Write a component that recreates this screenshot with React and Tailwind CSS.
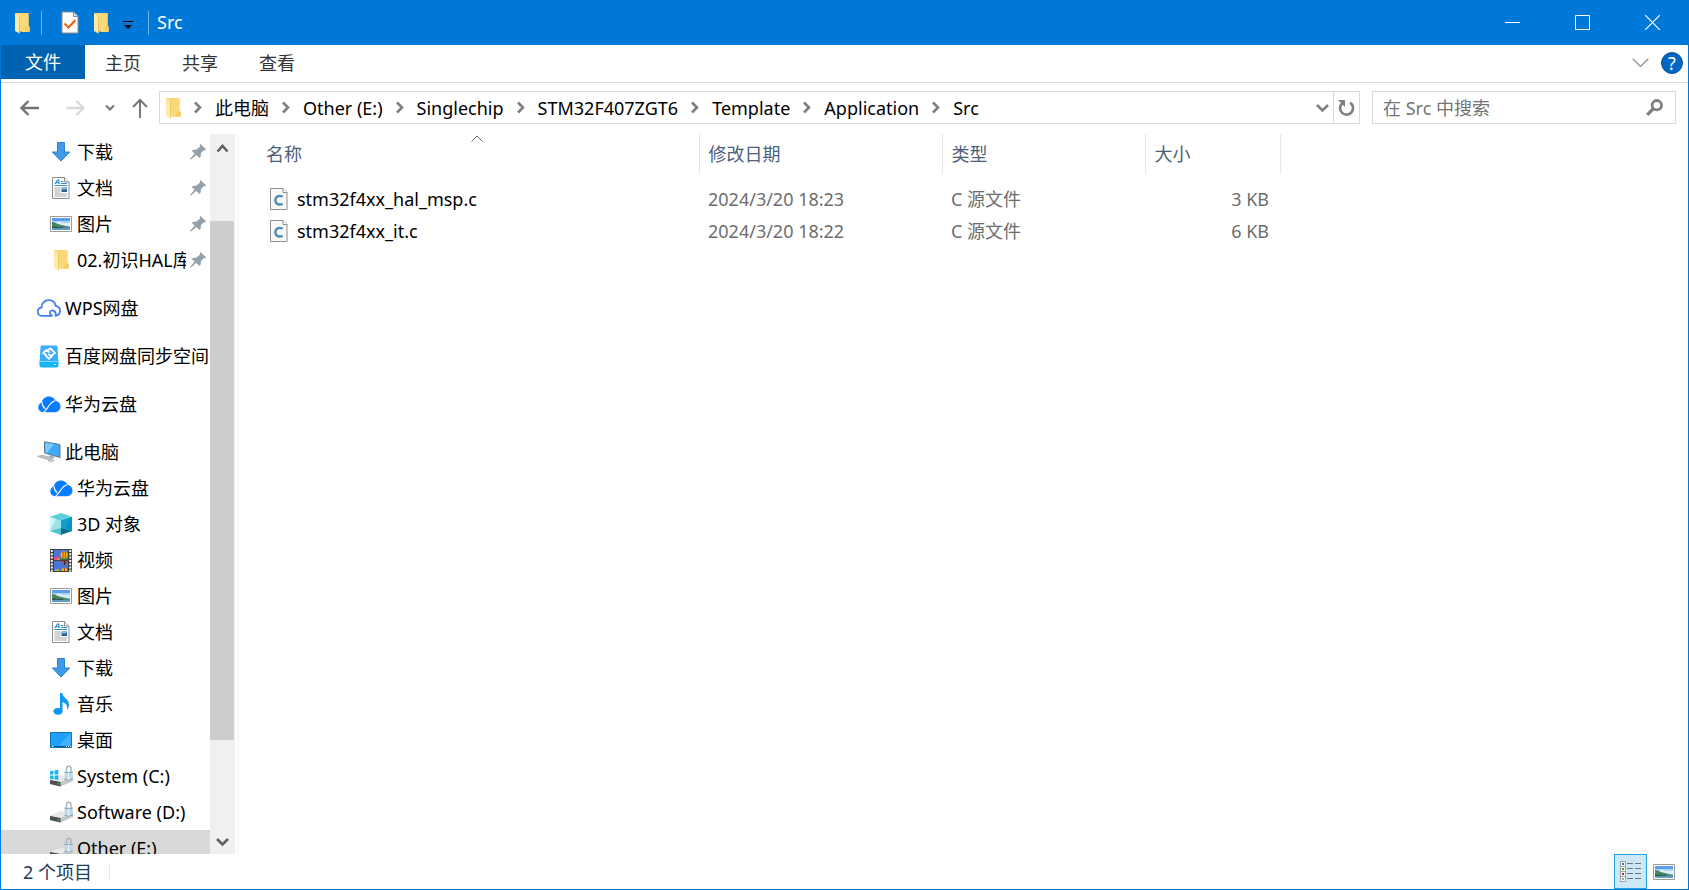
function FolderIcon() {
  return (
    <svg width="16" height="22" viewBox="0 0 16 22" className="shrink-0">
      <path d="M1 1h13.5v13l1 1v5H8z" fill="#f7d774" />
      <path d="M5.500 1H14.500V14.500H15.500V19.500H5.500z" fill="#fbd978" />
      <path d="M11.500 14.500h4v5h-4z" fill="#f6cd62" />
      <path d="M1 1.500 5.500 4v17.500L1 19z" fill="#fee9a6" />
      <path d="M5.500 4v17.500" stroke="#e5bf58" strokeWidth="0.7" />
    </svg>
  );
}

function CheckDocIcon() {
  return (
    <svg width="18" height="23" viewBox="0 0 18 23">
      <path d="M1 1h11.500L17 5.500V22H1z" fill="#fff" stroke="#8c8c8c" />
      <path d="M12.500 1v4.500H17" fill="#ddd" stroke="#8c8c8c" />
      <path d="M3.500 12.500 7.500 16.500 14.500 9" fill="none" stroke="#f25c05" strokeWidth="2" />
    </svg>
  );
}

function DownloadIcon() {
  return (
    <svg width="22" height="22" viewBox="0 0 22 22">
      <path d="M7.500 1.500h7V11h5.200L11 20 2.300 11H7.500z" fill="#3d9be9" stroke="#2f7fcb" />
    </svg>
  );
}

function DocumentIcon() {
  return (
    <svg width="22" height="22" viewBox="0 0 22 22">
      <path d="M2.500.5h12l4.500 4.500v16.500H2.500z" fill="#fff" stroke="#8a8f94" />
      <path d="M14.500.5V5H19" fill="#eee" stroke="#8a8f94" />
      <path d="M5 7 7.500 3h1.200L9.200 7M6 5.700h3" fill="none" stroke="#1b86d2" strokeWidth="1.100" />
      <path d="M11 4.500h2.500M11 6.500h6M4.500 8.500H17" stroke="#2f8fd6" />
      <path d="M4.500 11h6M4.500 13h6M4.500 15h6M4.500 17h12.500M4.500 19h12.500" stroke="#a4a9ad" />
      <path d="M11.500 10.500H17v4.500h-5.500z" fill="#2c5f8f" />
      <path d="M12 11h4.500v1.500H12z" fill="#8cbdea" />
    </svg>
  );
}

function PictureIcon() {
  return (
    <svg width="22" height="16" viewBox="0 0 22 16">
      <path d="M.5.5h21v15H.5z" fill="#fff" stroke="#9b9b9b" />
      <path d="M2 2h18v12H2z" fill="#a9d3f5" />
      <path d="M2 2h18v3H2z" fill="#5c9df0" />
      <path d="M6 6.500c3-1.500 5-.5 7 .5h7V10H6z" fill="#dcedf8" />
      <path d="M2 11h18v3H2z" fill="#5f9cc0" />
      <path d="M2 6c3 0 4.500 1.500 7.500 2.500L20 11v.8H2z" fill="#4a8565" />
      <path d="M2 10.500c5 0 7 1 11 .3v1.200H2z" fill="#2d5a55" />
    </svg>
  );
}

function WpsCloudIcon() {
  return (
    <svg width="24" height="18" viewBox="0 0 24 18">
      <path
        d="M15 16.800H5.200A4 4 0 0 1 4.500 8.500C4.500 4 7.800 1.200 11.700 1.200c3.600 0 6.300 2.300 7 5.700 2.600.5 4.300 2.300 4.300 5 0 2.400-1.700 4.300-4.300 4.800.3-2.700-.7-4.700-2.600-5.300-1.700-.5-3.300.8-3.100 2.600.1 1.500 1 2.500 2.600 2.800"
        fill="none"
        stroke="#3f7df0"
        strokeWidth="1.800"
      />
    </svg>
  );
}

function BaiduIcon() {
  return (
    <svg width="20" height="23" viewBox="0 0 20 23">
      <path d="M3 .5h14a1.500 1.500 0 0 1 1.500 1.300L19.500 18H.5L1.500 1.800A1.500 1.500 0 0 1 3 .5z" fill="#3badff" />
      <rect x=".5" y="16" width="19" height="6.500" rx="2" fill="#14b5f5" />
      <path d="M.5 16.500h19" stroke="#7bd6ff" />
      <path d="M15 19.500h2" stroke="#fff" />
      <path
        d="M10.500 7.500 7.500 5 4.200 8l3.300 2.500M9 5l2.500-1.500L16 8l-3.500 2.500M9.500 9l3 2.500-2.500 2.200-3-2.700"
        fill="none"
        stroke="#fff"
        strokeWidth="1.800"
      />
    </svg>
  );
}

function HuaweiCloudIcon() {
  return (
    <svg width="23" height="17" viewBox="0 0 23 17">
      <path
        d="M4 6.500C4.300 2.800 7.400.5 11 .5c3 0 5.400 1.600 6.500 4.300 3 .5 5 2.800 5 5.700 0 3.200-2.400 5.700-5.700 5.700H5C2.300 16.200.3 14 .3 11.300.3 8.900 1.800 7 4 6.500z"
        fill="#0a7cff"
      />
      <path d="M4.200 6.500c-.3 2.500.6 4.200 3 6.300" fill="none" stroke="#fff" strokeWidth="1.100" />
      <path d="M5.500 16.500c2-1.500 4-4.800 6-7.500 1.500-2.200 3.300-3.600 5.500-4.200" fill="none" stroke="#fff" strokeWidth="1.100" />
    </svg>
  );
}

function ComputerIcon() {
  return (
    <svg width="24" height="22" viewBox="0 0 24 22">
      <path d="M7.500.8 23 3.500v13L7.500 12z" fill="#3fa9f5" stroke="#52718c" strokeWidth="0.900" />
      <path d="M8.200 1.700 17 3.200 10 12 8.200 11.500z" fill="#7cc9fb" />
      <path d="m13 14 4 1.500v2L12 16z" fill="#a8b1b8" />
      <path d="m.5 15.500 4-1.500 12 3-4 2z" fill="#ced4d9" stroke="#9aa3aa" strokeWidth="0.600" />
      <path d="m3 15.700 9 2.300M5.500 15l8.500 2.200" stroke="#88939b" strokeWidth="0.600" strokeDasharray="1.500 1" />
      <path d="m11 19.800 3-1.300 3.500 1-3 1.300z" fill="#c3cad0" stroke="#9aa3aa" strokeWidth="0.500" />
    </svg>
  );
}

function CubeIcon() {
  return (
    <svg width="22" height="22" viewBox="0 0 22 22">
      <path d="M11 .3 22 4v14l-11 3.800L0 18V4z" fill="#35c0d6" />
      <path d="M0 4 11 .3 22 4 11 7.500z" fill="#5bd0de" />
      <path d="M0 4l11 3.500v10L0 18z" fill="#9fe3ea" />
      <path d="M0 4l6 2-6 12z" fill="#d3f4f5" />
      <path d="M22 4 11 7.500v9L22 18z" fill="#0f9fc9" />
      <path d="M22 4v14l-7-4z" fill="#0c8fd0" />
      <path d="M0 18l11-3v6.800z" fill="#4fc4cf" />
      <path d="M22 18l-11-3v6.800z" fill="#0d6f86" />
    </svg>
  );
}

function VideoIcon() {
  return (
    <svg width="22" height="23" viewBox="0 0 22 23">
      <path d="M0 0h22v23H0z" fill="#414141" />
      <path d="M1.800 1v22M20.200 1v22" stroke="#f2f2f2" strokeWidth="2" strokeDasharray="2 1.300" />
      <path d="M4 1h14v10H4zM4 12h14v10H4z" fill="#4877d8" />
      <path d="M4 8.500c2-2 4-1 6 .5v2H4z" fill="#e2478c" />
      <path d="M7 9.500h4V11H7z" fill="#f08a2c" />
      <path d="M10 9.500h8V11h-8z" fill="#267a34" />
      <circle cx="14" cy="6" r="3.500" fill="#f4c400" />
      <path d="M12.500 3h1v6h-1zM14.800 3h1v6h-1z" fill="#d7261c" />
      <path d="M11.500 12h6l-1.500 2.500h-3z" fill="#e3342b" />
      <path d="M14 12h1.200v4H14z" fill="#3b2a20" />
      <path d="M11.500 22c-.5-4.500 6-4.500 5.500 0z" fill="#f4c400" />
      <path d="M13.700 18.700h1.200V22h-1.200z" fill="#c72f24" />
      <path d="M5 20.500h4V22H5z" fill="#d8b51c" />
    </svg>
  );
}

function MusicIcon() {
  return (
    <svg width="22" height="22" viewBox="0 0 22 22">
      <ellipse cx="8" cy="18.300" rx="4.500" ry="3.400" fill="#0d96f2" />
      <path d="M10 0h2.200c.4 4.500 6.800 6 6.800 11.500 0 2.200-.7 4-2 5.500 1-5-1.500-7-4.500-8v9.500H10z" fill="#0d96f2" />
    </svg>
  );
}

function DesktopIcon() {
  return (
    <svg width="22" height="16" viewBox="0 0 22 16">
      <path d="M.5.5h21v15H.5z" fill="#1ea0fb" stroke="#0f72b8" />
      <path d="M21 1v12.500H9z" fill="#45b2ff" />
      <path d="M1 14.500h20" stroke="#0b5d99" />
      <path d="M2 14.500h1.500M16 14.500h1M18 14.500h1M20 14.500h1" stroke="#fff" />
    </svg>
  );
}

function DriveIcon({ system }) {
  return (
    <svg width="23" height="22" viewBox="0 0 23 22">
      <path d="M0 15 10 10.500 23 12v4l-12.500 5.500L0 19z" fill="#c4c7c9" />
      <path d="M0 15 10 10.500l13 1.500-12.500 5z" fill="#e6e8e9" />
      <path d="M0 15l10.500 2v4.500L0 19z" fill="#4a4d4f" />
      <path d="M7.500 18.300h1.500v1.200H7.500z" fill="#45d060" />
      <path d="M16.500 7V3.500c0-3 4.500-3 4.500 0V7" fill="none" stroke="#adb4b9" strokeWidth="1.500" />
      <path d="M14.500 6.500h8.300v8.500l-4 1.300-4.300-1.300z" fill="#c3d6e3" />
      <path d="M14.500 7l4 1 4.300-1M14.500 14l4 1.200 4.300-1.200" fill="none" stroke="#7fa3bd" />
      <path d="M18.500 8v7" stroke="#e9f1f6" strokeWidth="1.500" />
      {system && (
        <path
          d="M0 6.300 3.500 5.600v3.900H0zM4.500 5.400 8.300 4.800v4.700H4.500zM0 10.500h3.500v3.800L0 13.700zM4.500 10.500h3.800v4.400l-3.800-.6z"
          fill="#19b4f1"
        />
      )}
    </svg>
  );
}

function SystemDriveIcon() {
  return <DriveIcon system />;
}

function PinIcon() {
  return (
    <svg width="16" height="16" viewBox="0 0 16 16" className="mr-1 shrink-0">
      <path
        d="M10.300 0 16 5.200l-1 1.200-1.200-.3-3.100 3.500c.4 1.800 0 3.200-1 4.400L6.200 11 .8 15.800 0 15l4.700-5.500L1.500 6.700c1.300-1 3-1.300 4.700-.9l3.900-3.300-.4-1.400z"
        fill="#94a0a9"
      />
    </svg>
  );
}

function CFileIcon() {
  return (
    <svg width="18" height="22" viewBox="0 0 18 22" className="shrink-0">
      <path d="M.5.5H13l4 4v17H.5z" fill="#f8f8f8" stroke="#8d8d8d" />
      <path d="M13 .5v4h4" fill="#fff" stroke="#8d8d8d" />
      <path d="M12.700 8.700C9 6.700 5.400 8.600 5.400 12.200s3.600 5.500 7.300 3.500" fill="none" stroke="#4b90ad" strokeWidth="2.400" />
    </svg>
  );
}

function Chevron({ direction = "right", className = "" }) {
  const paths = {
    right: "M4 1.500 9 6.500 4 11.500",
    down: "M1 4 6.500 9.500 12 4",
    up: "M1.500 9.500 6.500 4 11.500 9.500",
  };
  return (
    <svg width="13" height="13" viewBox="0 0 13 13" className={className}>
      <path d={paths[direction]} fill="none" stroke="currentColor" strokeWidth="2.600" />
    </svg>
  );
}

const crumbs = ["此电脑", "Other (E:)", "Singlechip", "STM32F407ZGT6", "Template", "Application", "Src"];

const quickAccess = [
  { label: "下载", icon: DownloadIcon },
  { label: "文档", icon: DocumentIcon },
  { label: "图片", icon: PictureIcon },
  { label: "02.初识HAL库", icon: FolderIcon },
];

const clouds = [
  { label: "WPS网盘", icon: WpsCloudIcon },
  { label: "百度网盘同步空间", icon: BaiduIcon },
  { label: "华为云盘", icon: HuaweiCloudIcon },
];

const computer = [
  { label: "华为云盘", icon: HuaweiCloudIcon },
  { label: "3D 对象", icon: CubeIcon },
  { label: "视频", icon: VideoIcon },
  { label: "图片", icon: PictureIcon },
  { label: "文档", icon: DocumentIcon },
  { label: "下载", icon: DownloadIcon },
  { label: "音乐", icon: MusicIcon },
  { label: "桌面", icon: DesktopIcon },
  { label: "System (C:)", icon: SystemDriveIcon },
  { label: "Software (D:)", icon: DriveIcon },
  { label: "Other (E:)", icon: DriveIcon, selected: true },
];

const files = [
  { name: "stm32f4xx_hal_msp.c", date: "2024/3/20 18:23", type: "C 源文件", size: "3 KB" },
  { name: "stm32f4xx_it.c", date: "2024/3/20 18:22", type: "C 源文件", size: "6 KB" },
];

function TreeItem({ item, nested, pinned }) {
  const Icon = item.icon;
  return (
    <a
      href="#"
      className={`flex h-9 shrink-0 items-center gap-1 ${nested ? "pl-12" : "pl-9"} ${
        item.selected ? "bg-[#d9d9d9]" : ""
      }`}
    >
      <span className="flex w-6 shrink-0 justify-center">
        <Icon />
      </span>
      <span className="min-w-0 flex-1 overflow-hidden whitespace-nowrap">{item.label}</span>
      {pinned && <PinIcon />}
    </a>
  );
}

function TitleBar() {
  return (
    <header className="flex h-[45px] shrink-0 items-center bg-[#0078d7] pr-0.5 pl-3.5 text-white">
      <FolderIcon />
      <span className="ml-[11px] h-6 w-px bg-[#6fb4ea]" />
      <button aria-label="属性" className="ml-[19px]">
        <CheckDocIcon />
      </button>
      <button aria-label="新建文件夹" className="ml-3.5">
        <FolderIcon />
      </button>
      <button aria-label="自定义快速访问工具栏" className="ml-3.5 pt-1">
        <svg width="10" height="10" viewBox="0 0 10 10">
          <path d="M0 1.500h10" stroke="#000" />
          <path d="M1 5h8L5 9z" fill="#000" />
        </svg>
      </button>
      <span className="ml-[15px] h-6 w-px bg-[#6fb4ea]" />
      <h1 className="ml-2 flex-1 pb-0.5">Src</h1>
      <button aria-label="最小化" className="flex h-full w-[70px] items-center justify-center">
        <svg width="15" height="15" viewBox="0 0 15 15">
          <path d="M0 7.500h15" stroke="#fff" />
        </svg>
      </button>
      <button aria-label="最大化" className="flex h-full w-[70px] items-center justify-center">
        <svg width="15" height="15" viewBox="0 0 15 15">
          <path d="M.5.5h14v14H.5z" fill="none" stroke="#fff" />
        </svg>
      </button>
      <button aria-label="关闭" className="flex h-full w-[70px] items-center justify-center">
        <svg width="15" height="15" viewBox="0 0 15 15">
          <path d="M0 0l15 15M15 0 0 15" stroke="#fff" strokeWidth="1.200" />
        </svg>
      </button>
    </header>
  );
}

function Ribbon() {
  return (
    <div className="flex h-[38px] shrink-0 items-start border-b border-[#dadbdc]">
      <button className="h-[34px] w-[84px] bg-[#0063b1] text-white">文件</button>
      <div className="flex h-9 flex-1 gap-px text-[#333]">
        <button className="px-5">主页</button>
        <button className="px-5">共享</button>
        <button className="px-5">查看</button>
      </div>
      <div className="flex h-9 items-center gap-3 pr-[5px]">
        <button aria-label="展开功能区">
          <svg width="17" height="10" viewBox="0 0 17 10">
            <path d="M.7.700 8.500 8.500 16.300.7" fill="none" stroke="#999" strokeWidth="1.500" />
          </svg>
        </button>
        <button
          aria-label="帮助"
          className="flex size-[22px] items-center justify-center rounded-full border border-[#0a4f91] bg-[#0067c5] text-white"
        >
          ?
        </button>
      </div>
    </div>
  );
}

function AddressBar() {
  return (
    <div className="flex h-[51px] shrink-0 items-start pt-2 pr-3 text-[#808080]">
      <div className="flex h-[33px] w-[158px] shrink-0 items-center pl-[19px]">
        <button aria-label="后退">
          <svg width="19" height="16" viewBox="0 0 19 16">
            <path d="M19 8H2M8.500 1 1.500 8l7 7" fill="none" stroke="#737373" strokeWidth="2.400" />
          </svg>
        </button>
        <button aria-label="前进" className="ml-[27px]">
          <svg width="19" height="16" viewBox="0 0 19 16">
            <path d="M0 8h17M10.500 1l7 7-7 7" fill="none" stroke="#d9d9d9" strokeWidth="2.400" />
          </svg>
        </button>
        <button aria-label="最近浏览的位置" className="ml-5">
          <svg width="10" height="8" viewBox="0 0 10 8">
            <path d="M1 1.500l4 4 4-4" fill="none" stroke="#737373" strokeWidth="2" />
          </svg>
        </button>
        <button aria-label="上移" className="ml-[17px]">
          <svg width="16" height="20" viewBox="0 0 16 20">
            <path d="M8 20V2M1 9l7-7.200L15 9" fill="none" stroke="#737373" strokeWidth="1.900" />
          </svg>
        </button>
      </div>
      <div className="flex h-[33px] flex-1 items-center border border-[#d9d9d9] pl-[5px]">
        <FolderIcon />
        <nav className="flex flex-1 items-center text-black">
          {crumbs.map((crumb) => (
            <div key={crumb} className="flex items-center">
              <Chevron className="mr-[11px] ml-2.5 text-[#808080]" />
              <a href="#">{crumb}</a>
            </div>
          ))}
        </nav>
        <button aria-label="以前的位置" className="px-1">
          <Chevron direction="down" />
        </button>
        <button aria-label="刷新" className="flex h-full w-[26px] items-center justify-center border-l border-[#d9d9d9]">
          <svg width="17" height="18" viewBox="0 0 17 18">
            <path d="M4.300 4.200A6.500 6.500 0 1 0 12 3.600" fill="none" stroke="currentColor" strokeWidth="2.600" />
            <path d="M0 1h7v7z" fill="currentColor" />
          </svg>
        </button>
      </div>
      <label className="ml-3 flex h-[33px] w-[304px] shrink-0 items-center border border-[#d9d9d9] pl-2.5 pr-3">
        <input
          type="search"
          aria-label="搜索"
          placeholder="在 Src 中搜索"
          className="min-w-0 flex-1 outline-none placeholder:text-[#757575]"
        />
        <svg width="17" height="17" viewBox="0 0 17 17">
          <circle cx="10.800" cy="6.200" r="4.700" fill="none" stroke="currentColor" strokeWidth="2.800" />
          <path d="M7.500 9.500 1.200 15.800" stroke="currentColor" strokeWidth="3.200" />
        </svg>
      </label>
    </div>
  );
}

function Sidebar() {
  return (
    <aside className="flex w-[238px] shrink-0 border-r-2 border-[#f7f7f7] text-black">
      <nav className="flex w-[209px] shrink-0 flex-col overflow-hidden">
        {quickAccess.map((item) => (
          <TreeItem key={item.label} item={item} nested pinned />
        ))}
        <div className="flex flex-col gap-3 py-3">
          {clouds.map((item) => (
            <TreeItem key={item.label} item={item} />
          ))}
        </div>
        <TreeItem item={{ label: "此电脑", icon: ComputerIcon }} />
        {computer.map((item) => (
          <TreeItem key={item.label} item={item} nested />
        ))}
      </nav>
      <div className="flex w-[25px] flex-col bg-[#f0f0f0] text-[#606060]">
        <button aria-label="向上滚动" className="flex h-[29px] items-center justify-center">
          <Chevron direction="up" />
        </button>
        <div className="flex-[58]" />
        <div className="w-6 flex-[519] bg-[#cdcdcd]" />
        <div className="flex-[89]" />
        <button aria-label="向下滚动" className="flex h-[25px] items-center justify-center">
          <Chevron direction="down" />
        </button>
      </div>
    </aside>
  );
}

function FileList() {
  return (
    <main className="min-w-0 flex-1 pl-[17px]">
      <table className="table-fixed text-left text-[#6d6d6d]">
        <colgroup>
          <col className="w-[443px]" />
          <col className="w-[243px]" />
          <col className="w-[203px]" />
          <col className="w-[135px]" />
        </colgroup>
        <thead className="text-[#4c607a]">
          <tr className="h-10">
            <th className="relative border-r border-[#e5e5e5] px-2.5 font-normal">
              名称
              <svg width="12" height="7" viewBox="0 0 12 7" className="absolute top-px left-1/2 -translate-x-1/2">
                <path d="M.5 6.500 6 1l5.500 5.500" fill="none" stroke="#6d6d6d" />
              </svg>
            </th>
            <th className="border-r border-[#e5e5e5] px-[9px] font-normal">修改日期</th>
            <th className="border-r border-[#e5e5e5] px-[9px] font-normal">类型</th>
            <th className="border-r border-[#e5e5e5] px-[9px] font-normal">大小</th>
          </tr>
        </thead>
        <tbody>
          <tr className="h-[9px]" />
          {files.map((file) => (
            <tr key={file.name} className="h-8">
              <td className="pl-3.5">
                <a href="#" className="flex items-center gap-[9px] text-black">
                  <CFileIcon />
                  {file.name}
                </a>
              </td>
              <td className="px-[9px]">{file.date}</td>
              <td className="px-[9px]">{file.type}</td>
              <td className="px-[11px] text-right">{file.size}</td>
            </tr>
          ))}
        </tbody>
      </table>
    </main>
  );
}

function StatusBar() {
  return (
    <footer className="flex h-[35px] shrink-0 items-center pr-[13px] text-[#1e395b]">
      <span className="pl-[22px]">2 个项目</span>
      <span className="ml-[17px] h-[17px] w-px bg-[#e8e8e8]" />
      <button
        aria-label="详细信息"
        className="ml-auto flex h-full w-[33px] items-center justify-center border border-[#26a0da] bg-[#cce8f6]"
      >
        <svg width="21" height="21" viewBox="0 0 21 21">
          <path d="M.5.500h5v20h-5zM.5 5.500h5M.5 10.500h5M.5 15.500h5" fill="#fff" stroke="#a0a0a0" />
          <path d="M2 2h2v2H2z" fill="#3c78b4" />
          <path d="M2 7h2v2H2z" fill="#5a8f3c" />
          <path d="M2 12h2v2H2z" fill="#b42b2b" />
          <path d="M2 17h2v2H2z" fill="#8fa6b5" />
          <path d="M7 2.500h6M15 2.500h6M7 7.500h6M15 7.500h6M7 12.500h6M15 12.500h6M7 17.500h6M15 17.500h6" stroke="#6e7478" />
        </svg>
      </button>
      <button aria-label="大图标" className="ml-1.5">
        <PictureIcon />
      </button>
    </footer>
  );
}

export default function App() {
  return (
    <div className="flex h-screen flex-col overflow-hidden bg-white font-['Noto_Sans','Noto_Sans_CJK_SC',sans-serif] text-[18px] leading-6">
      <TitleBar />
      <div className="flex min-h-0 flex-1 flex-col border-x border-b border-[#0078d7]">
        <Ribbon />
        <AddressBar />
        <div className="flex min-h-0 flex-1">
          <Sidebar />
          <FileList />
        </div>
        <StatusBar />
      </div>
    </div>
  );
}
